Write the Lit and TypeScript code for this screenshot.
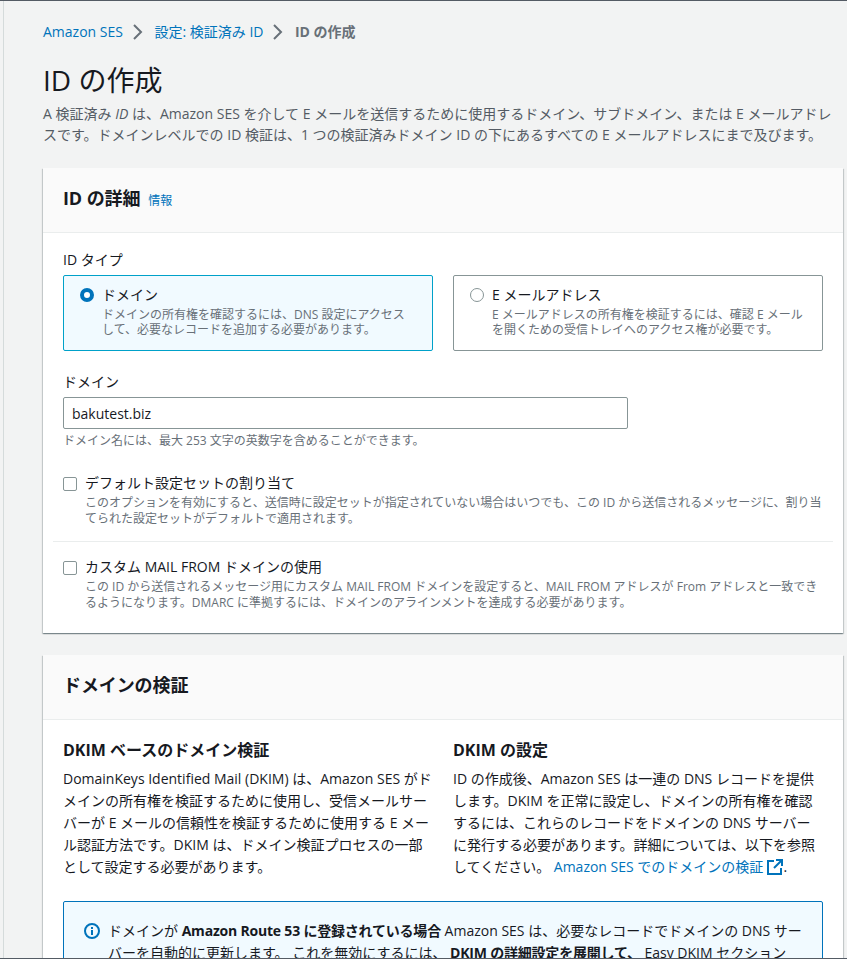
import { LitElement, html, css } from "lit";
import { customElement } from "lit/decorators.js";

@customElement("app-root")
export class AppRoot extends LitElement {
  static styles = css`
    :host {
      display: block;
      height: 959px;
      overflow: hidden;
      box-sizing: border-box;
      background: #f2f3f3;
      border-top: 1px solid #545b64;
      border-bottom: 1px solid #545b64;
      font-family: "Open Sans", "Noto Sans CJK JP", sans-serif;
      font-size: 14px;
      line-height: 20px;
      color: #16191f;
    }
    * { box-sizing: border-box; }
    .shell { margin-left: 3px; border-left: 1px solid #d5dbdb; padding: 21px 4px 0 39px; height: 100%; }
    a { color: #0073bb; text-decoration: none; }
    .crumbs { display: flex; align-items: center; height: 20px; font-size: 14px; }
    .crumbs svg { margin: 0 9.5px 0 8px; }
    .crumbs b { color: #687078; font-weight: 700; }
    h1 { margin: 20px 0 0; font-size: 28px; line-height: 36px; font-weight: 400; }
    .lead { margin: 5px 0 0; color: #545b64; padding-right: 8px; line-height: 21px; }
    .card { background: #fff; box-shadow: 0 1px 1px 0 rgba(0,28,36,.3), 1px 1px 1px 0 rgba(0,28,36,.15), -1px 1px 1px 0 rgba(0,28,36,.15); margin-bottom: 22px; }
    .lead + .card { margin-top: 23px; }
    .head { background: #fafafa; border-bottom: 1px solid #eaeded; height: 65px; padding: 0 20px 4px; display: flex; align-items: center; gap: 8px; }
    .head h2 { margin: 0; font-size: 18px; line-height: 24px; font-weight: 700; letter-spacing: -.1px; }
    .head a { font-size: 12px; margin-top: 6px; }
    .body { padding: 17px 20px 22px; }
    .label { height: 20px; line-height: 20px; }
    .tiles { display: grid; grid-template-columns: 1fr 1fr; gap: 20px; margin-top: 5px; }
    .tile { height: 76px; border: 1px solid #879596; border-radius: 2px; padding: 9px 16px; display: flex; gap: 8px; }
    .tile.on { border-color: #00a1c9; background: #f1faff; }
    .radio { width: 14px; height: 14px; margin-top: 3px; flex: none; border: 1px solid #879596; border-radius: 50%; background: #fff; }
    .on .radio { border: 4px solid #0073bb; }
    .desc { display: block; font-size: 12px; line-height: 15px; color: #687078; margin-top: 2px; }
    .check .desc { line-height: 16px; margin-top: 2px; }
    .field { margin-top: 21px; }
    input { display: block; width: 565px; height: 32px; margin-top: 5px; border: 1px solid #879596; border-radius: 2px; padding: 0 8px; font: inherit; color: #16191f; background: #fff; }
    .hint { font-size: 12px; line-height: 16px; color: #687078; margin-top: 4px; }
    .check { display: flex; gap: 8px; }
    .box { width: 14px; height: 14px; margin-top: 4px; flex: none; border: 1px solid #879596; border-radius: 2px; background: #fff; }
    .checks { margin: 24px 0 0; }
    .rule { height: 1px; background: #eaeded; margin: 14px -10px 15px -10px; }
    .verify { padding-top: 20px; }
    .cols { display: grid; grid-template-columns: 1fr 1fr; gap: 20px; }
    h3 { margin: 0; font-size: 16px; line-height: 20px; font-weight: 700; }
    .cols p { margin: 8px 0 0; line-height: 22px; }
    .ext { vertical-align: -3px; margin-left: 4px; }
    .alert { margin-top: 23px; background: #f1faff; border: 1px solid #0073bb; border-radius: 2px; padding: 18px 14px 18px 20px; display: flex; gap: 8px; line-height: 22px; }
    .alert svg { flex: none; margin-top: 3px; }
    .alert b { letter-spacing: -.2px; }
  `;

  render() {
    const chev = html`<svg width="14" height="16" viewBox="0 0 14 16" fill="none" stroke="#687078" stroke-width="2"><path d="M3 1l7 7-7 7"/></svg>`;
    return html`<div class="shell">
      <nav class="crumbs"><a>Amazon SES</a>${chev}<a>設定: 検証済み ID</a>${chev}<b>ID の作成</b></nav>
      <h1>ID の作成</h1>
      <p class="lead">A 検証済み <i>ID</i> は、Amazon SES を介して E メールを送信するために使用するドメイン、サブドメイン、または E メールアドレスです。ドメインレベルでの ID 検証は、1 つの検証済みドメイン ID の下にあるすべての E メールアドレスにまで及びます。</p>
      <section class="card">
        <div class="head"><h2>ID の詳細</h2><a>情報</a></div>
        <div class="body">
          <div class="label">ID タイプ</div>
          <div class="tiles">
            <div class="tile on"><span class="radio"></span><div>ドメイン<span class="desc">ドメインの所有権を確認するには、DNS 設定にアクセスして、必要なレコードを追加する必要があります。</span></div></div>
            <div class="tile"><span class="radio"></span><div>E メールアドレス<span class="desc">E メールアドレスの所有権を検証するには、確認 E メールを開くための受信トレイへのアクセス権が必要です。</span></div></div>
          </div>
          <div class="field">
            <div class="label">ドメイン</div>
            <input value="bakutest.biz" />
            <div class="hint">ドメイン名には、最大 253 文字の英数字を含めることができます。</div>
          </div>
          <div class="checks">
            <div class="check"><span class="box"></span><div>デフォルト設定セットの割り当て<span class="desc">このオプションを有効にすると、送信時に設定セットが指定されていない場合はいつでも、この ID から送信されるメッセージに、割り当てられた設定セットがデフォルトで適用されます。</span></div></div>
            <div class="rule"></div>
            <div class="check"><span class="box"></span><div>カスタム MAIL FROM ドメインの使用<span class="desc">この ID から送信されるメッセージ用にカスタム MAIL FROM ドメインを設定すると、MAIL FROM アドレスが From アドレスと一致できるようになります。DMARC に準拠するには、ドメインのアラインメントを達成する必要があります。</span></div></div>
          </div>
        </div>
      </section>
      <section class="card">
        <div class="head"><h2>ドメインの検証</h2></div>
        <div class="body verify">
          <div class="cols">
            <div><h3>DKIM ベースのドメイン検証</h3><p>DomainKeys Identified Mail (DKIM) は、Amazon SES がドメインの所有権を検証するために使用し、受信メールサーバーが E メールの信頼性を検証するために使用する E メール認証方法です。DKIM は、ドメイン検証プロセスの一部として設定する必要があります。</p></div>
            <div><h3>DKIM の設定</h3><p>ID の作成後、Amazon SES は一連の DNS レコードを提供します。DKIM を正常に設定し、ドメインの所有権を確認するには、これらのレコードをドメインの DNS サーバーに発行する必要があります。詳細については、以下を参照してください。 <a>Amazon SES でのドメインの検証<svg class="ext" width="16" height="16" viewBox="0 0 16 16" fill="none" stroke="#0073bb" stroke-width="2"><path d="M7 2H1v13h13V9M9 1h6v6M15 1L7 9"/></svg></a>.</p></div>
          </div>
          <div class="alert">
            <svg width="16" height="16" viewBox="0 0 16 16"><circle cx="8" cy="8" r="7" fill="none" stroke="#0073bb" stroke-width="2"/><rect x="7" y="7" width="2" height="5" fill="#0073bb"/><rect x="7" y="4" width="2" height="2" fill="#0073bb"/></svg>
            <div>ドメインが <b>Amazon Route 53 に登録されている場合</b> Amazon SES は、必要なレコードでドメインの DNS サー<br />バーを自動的に更新します。 これを無効にするには、 <b>DKIM の詳細設定を展開して、</b> Easy DKIM セクション<br />の設定を変更します。</div>
          </div>
        </div>
      </section>
    </div>`;
  }
}
